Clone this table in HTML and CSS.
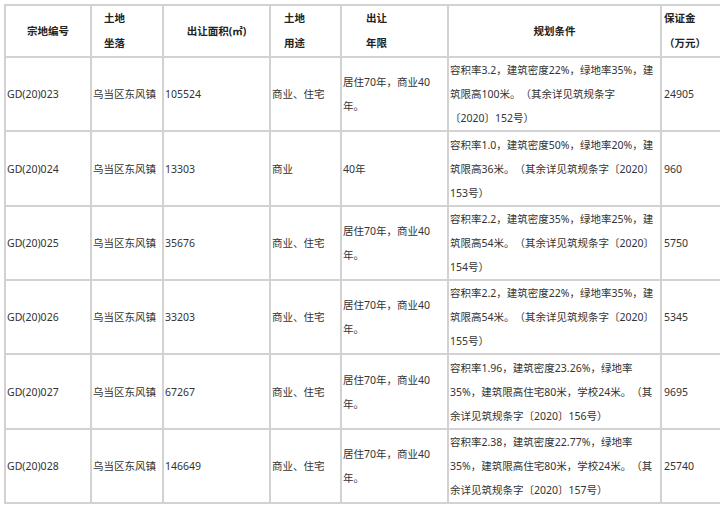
FILE: index.html
```html
<!DOCTYPE html>
<html lang="zh-CN">
<head>
<meta charset="utf-8">
<title>出让地块</title>
<link rel="stylesheet" href="styles.css">
</head>
<body>
<table class="land">
  <colgroup>
    <col class="c-id">
    <col class="c-loc">
    <col class="c-area">
    <col class="c-use">
    <col class="c-term">
    <col class="c-plan">
    <col class="c-dep">
  </colgroup>
  <thead>
    <tr class="head">
      <th class="center">宗地编号</th>
      <th class="pad-loc">土地<br>坐落</th>
      <th class="center">出让面积(㎡)</th>
      <th class="pad-use">土地<br>用途</th>
      <th class="pad-term">出让<br>年限</th>
      <th class="center">规划条件</th>
      <th class="pad-dep">保证金<br>（万元）</th>
    </tr>
  </thead>
  <tbody>
    <tr class="r75">
      <td>GD(20)023</td>
      <td>乌当区东风镇</td>
      <td>105524</td>
      <td>商业、住宅</td>
      <td>居住70年，商业40<br>年。</td>
      <td>容积率3.2，建筑密度22%，绿地率35%，建<br>筑限高100米。（其余详见筑规条字<br>〔2020〕152号）</td>
      <td class="dep">24905</td>
    </tr>
    <tr class="r76">
      <td>GD(20)024</td>
      <td>乌当区东风镇</td>
      <td>13303</td>
      <td>商业</td>
      <td>40年</td>
      <td>容积率1.0，建筑密度50%，绿地率20%，建<br>筑限高36米。（其余详见筑规条字〔2020〕<br>153号）</td>
      <td class="dep">960</td>
    </tr>
    <tr class="r75">
      <td>GD(20)025</td>
      <td>乌当区东风镇</td>
      <td>35676</td>
      <td>商业、住宅</td>
      <td>居住70年，商业40<br>年。</td>
      <td>容积率2.2，建筑密度35%，绿地率25%，建<br>筑限高54米。（其余详见筑规条字〔2020〕<br>154号）</td>
      <td class="dep">5750</td>
    </tr>
    <tr class="r75">
      <td>GD(20)026</td>
      <td>乌当区东风镇</td>
      <td>33203</td>
      <td>商业、住宅</td>
      <td>居住70年，商业40<br>年。</td>
      <td>容积率2.2，建筑密度22%，绿地率35%，建<br>筑限高54米。（其余详见筑规条字〔2020〕<br>155号）</td>
      <td class="dep">5345</td>
    </tr>
    <tr class="r76">
      <td>GD(20)027</td>
      <td>乌当区东风镇</td>
      <td>67267</td>
      <td>商业、住宅</td>
      <td>居住70年，商业40<br>年。</td>
      <td>容积率1.96，建筑密度23.26%，绿地率<br>35%，建筑限高住宅80米，学校24米。（其<br>余详见筑规条字〔2020〕156号）</td>
      <td class="dep">9695</td>
    </tr>
    <tr class="r75">
      <td>GD(20)028</td>
      <td>乌当区东风镇</td>
      <td>146649</td>
      <td>商业、住宅</td>
      <td>居住70年，商业40<br>年。</td>
      <td>容积率2.38，建筑密度22.77%，绿地率<br>35%，建筑限高住宅80米，学校24米。（其<br>余详见筑规条字〔2020〕157号）</td>
      <td class="dep">25740</td>
    </tr>
  </tbody>
</table>
</body>
</html>
```
FILE: styles.css
```css
html, body {
  margin: 0;
  padding: 0;
  background: #ffffff;
}

body {
  font-family: "Noto Sans", "Noto Sans CJK SC", sans-serif;
  font-size: 10.5px;
  color: #333333;
  text-spacing-trim: space-all;
}

.land {
  border-collapse: collapse;
  table-layout: fixed;
  width: 717px;
  margin: 4px 0 0 4px;
}

.c-id { width: 86px; }
.c-loc { width: 72px; }
.c-area { width: 107px; }
.c-use { width: 71px; }
.c-term { width: 107px; }
.c-plan { width: 213px; }
.c-dep { width: 61px; }

.land th,
.land td {
  border: 2px solid #d2d2d2;
  padding: 0 0 0 1px;
  vertical-align: middle;
  text-align: left;
  white-space: nowrap;
  overflow: hidden;
  line-height: 24px;
}

.land th {
  font-weight: bold;
  color: #222222;
  line-height: 25px;
}

.head { height: 49px; }
.r75 { height: 74px; }
.r76 { height: 75px; }

.land .center { text-align: center; padding: 0; }
.land .pad-loc { padding-left: 12px; }
.land .pad-use { padding-left: 13px; }
.land .pad-term { padding-left: 24px; }
.land .pad-dep { padding-left: 2px; }
.land .dep { padding-left: 2px; }
```
